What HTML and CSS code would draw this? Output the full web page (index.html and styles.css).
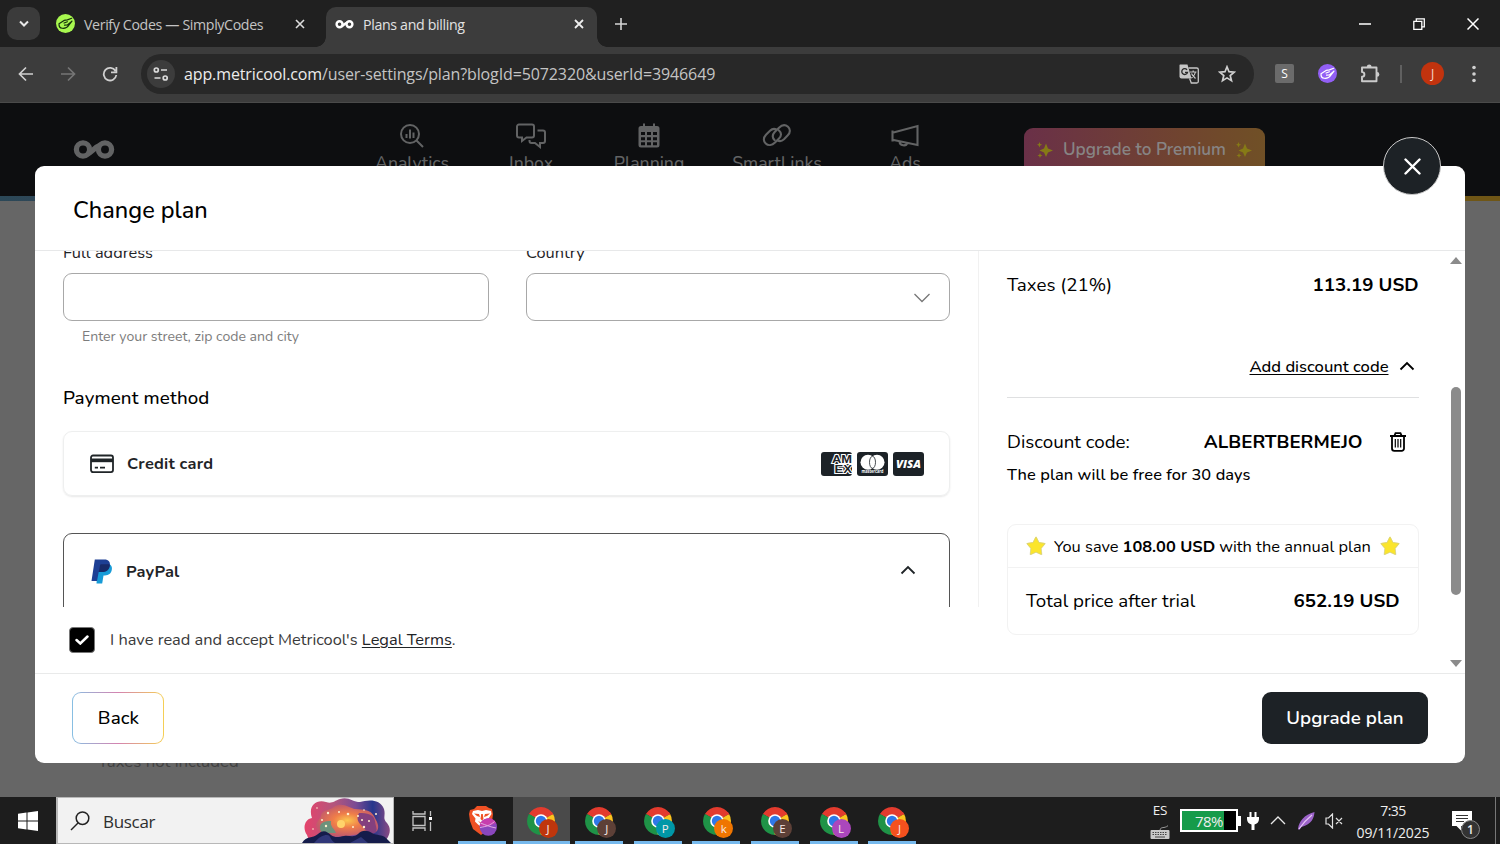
FILE: index.html
```html
<!DOCTYPE html>
<html lang="en">
<head>
<meta charset="utf-8">
<title>Plans and billing</title>
<link rel="stylesheet" href="styles.css">
</head>
<body>
<svg width="0" height="0" class="defs" aria-hidden="true">
  <symbol id="chrome" viewBox="0 0 28 28">
    <path d="M14 14 1.9 7A14 14 0 0 1 26.1 7z" fill="#e33b2e"/>
    <path d="M14 14 26.1 7A14 14 0 0 1 14 28z" fill="#fcc31e"/>
    <path d="M14 14 14 28A14 14 0 0 1 1.9 7z" fill="#1f9347"/>
    <path d="M1.9 7 8 17.5 14 14z" fill="#1f9347"/>
    <path d="M14 7.4H26.3L25 5H3z" fill="#e33b2e"/>
    <path d="M20 17.500 14 28l-1-3 3-8z" fill="#fcc31e"/>
    <circle cx="14" cy="14" r="6.800" fill="#fff"/><circle cx="14" cy="14" r="5.200" fill="#2f78e8"/>
  </symbol>
  <symbol id="hand" viewBox="0 0 20 20">
    <path d="M3.200 10.200 8.500 6.800l3.500-.6L16.500 4.500M3.200 10.200C3 13 4 14.800 6.500 15c3 .3 5.500-.8 7-3.200L16.800 7.500M8.500 9.500l3.500-1.300M9 11.800l3-.3 4.800-4" fill="none" stroke="currentColor" stroke-width="1.300" stroke-linecap="round" stroke-linejoin="round"/>
  </symbol>
  <symbol id="loops" viewBox="0 0 42 20">
    <g fill="none" stroke="currentColor" stroke-width="5.300"><circle cx="10" cy="9.500" r="6.600"/><circle cx="32" cy="9.500" r="6.600"/><path d="M14.500 14C19 12 22 7 27.500 5"/></g>
  </symbol>
  <symbol id="sparkles" viewBox="0 0 16 16">
    <path d="M9 1.500 11 6.500 16 8.500 11 10.500 9 15 7 10.500 2.500 8.500 7 6.500z M2.500 0 3.300 2 5.200 2.800 3.300 3.600 2.500 5.500 1.700 3.600 0 2.800 1.700 2z M3 11 3.700 12.800 5.500 13.500 3.700 14.200 3 16 2.300 14.200.5 13.500 2.300 12.800z" fill="#867a16"/>
  </symbol>
  <symbol id="star" viewBox="0 0 20 20">
    <path d="M10 1.500 12.600 6.900 18.500 7.800 14.500 12.200 15.200 18 10 15.600 4.800 18 5.500 12.200 1.500 7.800 7.400 6.900z" fill="#fbe52c" stroke="#fbe52c" stroke-width="1.600" stroke-linejoin="round"/>
    <path d="M10 .9 13 6.500 19.200 7.500 15.200 12.400 15.900 18.700 10 16.300 4.100 18.700 4.800 12.400.8 7.500 7 6.500z" fill="none" stroke="#c9c9a0" stroke-width=".6" stroke-linejoin="round"/>
  </symbol>
  <symbol id="up" viewBox="0 0 16 10"><path d="M1.500 8.500 8 2l6.500 6.500" fill="none" stroke="currentColor" stroke-width="1.800"/></symbol>
</svg>

<div class="screen">
  <div class="tabstrip">
    <div class="tab-search"><svg width="12" height="8" viewBox="0 0 12 8"><path d="M2 1.500 6 5.500 10 1.500" fill="none" stroke="#e8e8e8" stroke-width="2"/></svg></div>
    <div class="tab">
      <span class="fav"><svg width="19" height="19"><use href="#hand"/></svg></span>
      <span class="tab-title first">Verify Codes — SimplyCodes</span>
      <svg class="x" width="10" height="10" viewBox="0 0 10 10"><path d="M1 1l8 8M9 1 1 9" stroke="#ddd" stroke-width="1.600"/></svg>
    </div>
    <div class="tab active">
      <svg class="loop-fav" width="19" height="9"><use href="#loops"/></svg>
      <span class="tab-title second">Plans and billing</span>
      <svg class="x" width="10" height="10" viewBox="0 0 10 10"><path d="M1 1l8 8M9 1 1 9" stroke="#eee" stroke-width="1.800"/></svg>
    </div>
    <svg class="plus" width="12" height="12" viewBox="0 0 12 12"><path d="M6 0v12M0 6h12" stroke="#d5d5d5" stroke-width="1.600"/></svg>
    <div class="win">
      <svg width="12" height="12" viewBox="0 0 12 12"><path d="M0 6h12" stroke="#fff" stroke-width="1.500"/></svg>
      <svg width="12" height="12" viewBox="0 0 12 12"><path d="M.8 3.300h8v8h-8zM3.300 3.300V.8h8v8H8.800" fill="none" stroke="#fff" stroke-width="1.300"/></svg>
      <svg width="12" height="12" viewBox="0 0 12 12"><path d="M.5.5l11 11M11.500.5l-11 11" stroke="#fff" stroke-width="1.500"/></svg>
    </div>
  </div>

  <div class="toolbar">
    <svg class="nav-icon" width="16" height="16" viewBox="0 0 16 16"><path d="M15 8H2M8 1.500 1.500 8 8 14.500" fill="none" stroke="#d0d0d0" stroke-width="1.700"/></svg>
    <svg class="nav-icon" width="16" height="16" viewBox="0 0 16 16"><path d="M1 8h13M8 1.500 14.500 8 8 14.500" fill="none" stroke="#757575" stroke-width="1.700"/></svg>
    <svg class="nav-icon" width="16" height="16" viewBox="0 0 16 16"><path d="M13.500 5A6.300 6.300 0 1 0 14.300 9M14.400 1v5.300H9" fill="none" stroke="#d0d0d0" stroke-width="1.800"/></svg>
    <div class="omnibox">
      <span class="site"><svg width="16" height="14" viewBox="0 0 16 14"><g fill="none" stroke="#dadada" stroke-width="1.700"><circle cx="3.300" cy="3" r="2"/><path d="M8 3h6M1.500 11h6"/><circle cx="12.200" cy="11" r="2"/></g></svg></span>
      <span class="url"><b>app.metricool.com</b>/user-settings/plan?blogId=5072320&amp;userId=3946649</span>
      <svg width="20" height="20" viewBox="0 0 20 20"><path d="M1 .5h7.500l4 14H2.500A2 2 0 0 1 .5 12.500V1z" fill="#c6c6c6"/><path d="M9.500 4h8.300a1.500 1.500 0 0 1 1.500 1.500v12a1.500 1.500 0 0 1-1.500 1.500h-5.500l-1.700-4.500" fill="none" stroke="#c6c6c6" stroke-width="1.300"/><path d="M8 5.800a2.900 2.900 0 1 0 .5 2.500H6" fill="none" stroke="#282828" stroke-width="1.300"/><path d="M11 8h6.500M14.200 6.500V8M16.500 8c-.5 2.500-2 4.500-4 6M12.500 9.500c1 2 2.500 3.500 4 5" fill="none" stroke="#c6c6c6" stroke-width="1.200"/></svg>
      <svg class="bookmark" width="18" height="18" viewBox="0 0 18 18"><path d="M9 1.800 11 6.700 16.200 7.100 12.200 10.500 13.500 15.700 9 12.900 4.500 15.700 5.800 10.500 1.800 7.100 7 6.700z" fill="none" stroke="#d0d0d0" stroke-width="1.700"/></svg>
    </div>
    <div class="ext">
      <span class="ext-s">S</span>
      <span class="ext-hand"><svg width="19" height="19"><use href="#hand"/></svg></span>
      <svg class="puzzle" width="20" height="20" viewBox="0 0 20 20"><path d="M2 3.500h14.500v13.700H2v-4.500c3.200 0 3.200-4.600 0-4.600z" fill="none" stroke="#cbcbcb" stroke-width="1.900" stroke-linejoin="round"/><path d="M6.800 3a2.400 2.400 0 0 1 4.800 0zM17 8a2.400 2.400 0 0 1 0 4.800z" fill="#cbcbcb"/></svg>
      <i class="vsep"></i>
      <span class="avatar">J</span>
      <svg class="dots" width="4" height="18" viewBox="0 0 4 18"><g fill="#d0d0d0"><circle cx="2" cy="2.500" r="1.800"/><circle cx="2" cy="9" r="1.800"/><circle cx="2" cy="15.500" r="1.800"/></g></svg>
    </div>
  </div>

  <div class="page">
    <div class="site-header">
      <svg class="logo" width="42" height="20"><use href="#loops"/></svg>
      <div class="menu">
        <div class="menu-item"><svg width="26" height="26" viewBox="0 0 26 26"><g fill="none" stroke="#626364" stroke-width="2"><circle cx="11" cy="11" r="9"/><path d="M17.500 17.500l6.500 6.500M7.500 11v4M11 6.500v9M14.500 9.500v5.500"/></g></svg><span>Analytics</span></div>
        <div class="menu-item"><svg width="32" height="26" viewBox="0 0 32 26"><path d="M4 1.500h13a2 2 0 0 1 2 2v9a2 2 0 0 1-2 2h-5.500L7 18v-3.500H4a2 2 0 0 1-2-2v-9a2 2 0 0 1 2-2zM22.500 7.500H28a2 2 0 0 1 2 2V18a2 2 0 0 1-2 2h-3v4l-5-4h-3.500a2 2 0 0 1-2-2v-1" fill="none" stroke="#626364" stroke-width="2"/></svg><span>Inbox</span></div>
        <div class="menu-item"><svg width="22" height="26" viewBox="0 0 22 26"><path d="M3 3h16a2.500 2.500 0 0 1 2.500 2.500V22a2.500 2.500 0 0 1-2.500 2.500H3A2.500 2.500 0 0 1 .5 22V5.500A2.500 2.500 0 0 1 3 3zM5 .5h2V4H5zM15 .5h2V4h-2z" fill="#626364"/><path d="M3 9h4v3H3zM9 9h4v3H9zM15 9h4v3h-4zM3 14.200h4v3H3zM9 14.200h4v3H9zM15 14.200h4v3h-4zM3 19.300h4v2.900H3zM9 19.300h4v2.900H9zM15 19.300h4v2.900h-4z" fill="#0d0e10"/></svg><span>Planning</span></div>
        <div class="menu-item"><svg width="30" height="26" viewBox="0 0 30 26"><g fill="none" stroke="#626364" stroke-width="2.100" stroke-linecap="round"><path d="M12.500 17c-2.500-2.500-2-5.500.2-8L17 4.700c3-3 6.500-3.200 9-.9s2.500 5.700-.2 8.500l-3.800 4c-1.800 1.700-4.300 2.300-6.500 1.200M17 7.500c2.800 2.500 2.500 5.500 0 8l-4 4c-3 3-6.800 3.400-9.300 1s-2.500-5.800.3-8.700l4-4C9.800 6 12.500 5.500 14.500 6.500"/></g></svg><span>SmartLinks</span></div>
        <div class="menu-item"><svg width="28" height="26" viewBox="0 0 28 26"><path d="M1.500 7.500v11M1.500 9.800 26.500 3v19L1.500 16.800M8.500 18.500c0 4.500 7 5 7.500 1.500" fill="none" stroke="#626364" stroke-width="2.100"/></svg><span>Ads</span></div>
      </div>
      <div class="premium"><svg width="16" height="16"><use href="#sparkles"/></svg><span>Upgrade to Premium</span><svg width="16" height="16"><use href="#sparkles"/></svg></div>
    </div>
    <div class="rainbow"></div>
    <div class="backdrop"><span>Taxes not included</span></div>

    <div class="modal">
      <div class="modal-head">Change plan</div>
      <div class="modal-body">
        <div class="left">
          <div class="form">
            <div class="fields">
              <div class="field"><label>Full address</label><div class="input"></div><small>Enter your street, zip code and city</small></div>
              <div class="field"><label>Country</label><div class="input select"><svg width="16" height="10" viewBox="0 0 16 10"><path d="M.5 1 8 8.500 15.500 1" fill="none" stroke="#777" stroke-width="1.300"/></svg></div></div>
            </div>
            <div class="pay-title">Payment method</div>
            <div class="pay-card">
              <svg width="24" height="20" viewBox="0 0 24 20"><rect x="1" y="1.500" width="22" height="16.600" rx="2" fill="none" stroke="#1f2427" stroke-width="1.800"/><path d="M1 4.500h22v3.700H1z" fill="#1f2427"/><path d="M4.800 13.700H8M10 13.700h5" stroke="#1f2427" stroke-width="1.700"/></svg>
              <span class="credit">Credit card</span>
              <div class="brands">
                <svg width="31" height="24" viewBox="0 0 31 24"><rect width="31" height="24" rx="3" fill="#1c2227"/><text x="11" y="11.300" class="amex" textLength="20" lengthAdjust="spacingAndGlyphs">AM</text><text x="13.500" y="20.600" class="amex" textLength="17.500" lengthAdjust="spacingAndGlyphs">EX</text></svg>
                <svg width="31" height="24" viewBox="0 0 31 24"><rect width="31" height="24" rx="3" fill="#1c2227"/><circle cx="11" cy="10.300" r="7.500" fill="#fff"/><circle cx="20" cy="10.300" r="7.500" fill="#fff"/><ellipse cx="15.500" cy="10.300" rx="3" ry="6" fill="#fff" stroke="#1c2227" stroke-width=".8"/><text x="4.500" y="21.300" class="mc" textLength="22" lengthAdjust="spacingAndGlyphs">mastercard</text></svg>
                <svg width="31" height="24" viewBox="0 0 31 24"><rect width="31" height="24" rx="3" fill="#1c2227"/><text x="3" y="16" class="visa" textLength="25" lengthAdjust="spacingAndGlyphs">VISA</text></svg>
              </div>
            </div>
            <div class="pay-card paypal">
              <svg width="22" height="25" viewBox="0 0 22 25"><path d="M7 5h11c3 1.500 3.500 4 2.500 7-1.200 3.500-4 4.500-8 4.500l-1.300 8H5.500z" fill="#179bd7"/><path d="M3.800.5h9.700c4 0 6 2.300 5.300 6.200-.7 4.200-3.500 6.300-8 6.300H7.700L6 22H.5z" fill="#1d3f94"/><path d="M7.800 13 9 6.500c.1-.8.600-1.200 1.400-1.200h6.500c.8 0 1.400.1 1.900.4-.2 5-3.200 7.300-8 7.300z" fill="#172a68"/></svg>
              <span class="pp">PayPal</span>
              <svg class="chev" width="16" height="10"><use href="#up"/></svg>
            </div>
          </div>
          <div class="terms">
            <span class="check"><svg width="14" height="10" viewBox="0 0 14 10"><path d="M1.500 5 5.300 8.500 12.500 1.500" fill="none" stroke="#fff" stroke-width="2.500" stroke-linecap="round"/></svg></span>
            <span>I have read and accept Metricool's&nbsp;</span><a>Legal Terms</a><span>.</span>
          </div>
        </div>
        <div class="right">
          <div class="row taxes"><span>Taxes (21%)</span><b>113.19 USD</b></div>
          <div class="add"><a>Add discount code</a><svg width="16" height="10"><use href="#up"/></svg></div>
          <div class="row code"><span>Discount code:</span><b>ALBERTBERMEJO</b><svg width="18" height="20" viewBox="0 0 18 20"><path d="M1 4h16M5.500 3.500 6.500 1.200h5l1 2.300M3 4v12.500a2.300 2.300 0 0 0 2.300 2.300h7.400a2.300 2.300 0 0 0 2.300-2.300V4" fill="none" stroke="#000" stroke-width="1.800"/><path d="M6.300 7v8.500M9 7v8.500M11.700 7v8.500" stroke="#000" stroke-width="1.200"/></svg></div>
          <div class="free">The plan will be free for 30 days</div>
          <div class="total-box">
            <div class="save"><svg width="20" height="20"><use href="#star"/></svg><span class="s1">You save</span><b>108.00 USD</b><span>with the annual plan</span><svg width="20" height="20"><use href="#star"/></svg></div>
            <div class="row total"><span>Total price after trial</span><b>652.19 USD</b></div>
          </div>
        </div>
        <div class="scrollbar"><i class="arrow-up"></i><i class="thumb"></i><i class="arrow-down"></i></div>
      </div>
      <div class="modal-foot"><div class="back">Back</div><div class="upgrade">Upgrade plan</div></div>
      <div class="close"><svg width="17" height="17" viewBox="0 0 17 17"><path d="M1.500 1.500l14 14M15.500 1.500l-14 14" stroke="#fff" stroke-width="2.400" stroke-linecap="round"/></svg></div>
    </div>
  </div>

  <div class="taskbar">
    <div class="start"><svg width="20" height="20" viewBox="0 0 20 20"><path d="M0 2.800 8.500 1.600V9.500H0zM9.500 1.500 20 0v9.500H9.500zM0 10.500h8.500v7.900L0 17.200zM9.500 10.500H20V20L9.500 18.500z" fill="#fff"/></svg></div>
    <div class="search">
      <svg width="20" height="20" viewBox="0 0 20 20"><g fill="none" stroke="#222" stroke-width="1.500"><circle cx="12.500" cy="7.200" r="6.300"/><path d="M8 12 1 19"/></g></svg>
      <span>Buscar</span>
      <svg class="art" width="90" height="45" viewBox="0 0 90 45">
        <defs><linearGradient id="sky"><stop offset="0" stop-color="#e5436b"/><stop offset=".35" stop-color="#b3567d"/><stop offset=".6" stop-color="#7b4b94"/><stop offset=".8" stop-color="#26368c"/><stop offset="1" stop-color="#8a4a83"/></linearGradient><radialGradient id="glow"><stop offset="0" stop-color="#fbc74f"/><stop offset=".45" stop-color="#ef7d49"/><stop offset="1" stop-color="#c25a6b"/></radialGradient></defs>
        <path d="M5 37C0 30 3 21 10 20 6 9 13 1 24 4c6 2 8-1 14-3 8-3 13 3 20 3 7-2 20-4 24 7 2 7-2 9 3 14 5 6 2 12 1 14l-4 6H8z" fill="url(#sky)"/>
        <path d="M15 30c-3-6 4-8 4-13 2-6 9-4 14-9 8-4 15 2 20 3 8 1 15 0 19 7 3 6 6 10 3 15-6 6-16 2-24 4s-32 3-36-7z" fill="url(#glow)"/>
        <path d="M18 31c-1-7 5-8 11-8-1 6 3 7 5 12H20z" fill="#6c927c"/><path d="M57 15c8 0 15 1 16 8s3 9 0 12c-7 2-9-3-13-7s-6-7-3-13z" fill="#84407e"/>
        <path d="M0 45C5 37 10 41 16 36s9-2 13 1 8 2 13 1 10 2 14-2 9-4 14-1 10 1 14 5l5 5z" fill="#151c4b"/><path d="M12 45c5-6 9-8 13-8s3 5 8 8zM48 45l11-6 7 6z" fill="#303779"/>
        <g fill="#fff1cf"><circle cx="39" cy="26" r="4" fill="#ffd36a"/><circle cx="26" cy="15" r="1.200"/><circle cx="37" cy="14" r="1"/><circle cx="46" cy="16" r="1.300"/><circle cx="56" cy="18" r="1"/><circle cx="60" cy="22" r="1"/><circle cx="67" cy="23" r="1"/><circle cx="24" cy="28" r="1.200"/><circle cx="51" cy="29" r="1"/><circle cx="62" cy="29" r="1.200"/><circle cx="20" cy="22" r="1"/><circle cx="15" cy="10" r=".8"/><circle cx="74" cy="16" r="1"/><circle cx="62" cy="12" r=".8"/><circle cx="11" cy="31" r=".8"/></g>
      </svg>
    </div>
    <div class="taskview"><svg width="21" height="20" viewBox="0 0 21 20"><g fill="none" stroke="#c4c4c4" stroke-width="1.300"><path d="M1 0v3h12V0M1 20v-3h12v3M1 5.500h12v9H1zM18.500 0v5M18.500 11v9"/><path d="M17 7.500h3" stroke="#fff" stroke-width="3"/></g></svg></div>
    <div class="apps">
      <div class="app brave"><svg width="28" height="30" viewBox="0 0 28 30"><path d="M8 0h9l3 2 3 1 1 5-1 8-3 7-8 6-8-6-3-8-1-7 1-4 4-1z" fill="#ef5124"/><path d="M4 5l5-1 4 1 4-1 5 1 .5 3-3 4.500.5 3-3 3-4 3-4-3-3-3 .5-3L3 8z" fill="#fff"/><path d="M5 7.500l5 .500 1 3-3-1zM21 7.500 16 8l-1 3 3-1zM12.200 8h1.600l.7 5-1.500 1.500L11.500 13zM9 15l4 2 4-2-4 4z" fill="#ef5124"/><circle cx="19.300" cy="21" r="8.700" fill="#8a47bd"/><path d="M10.700 20A8.700 8.700 0 0 1 27 17l-10 4z" fill="#c73eae"/><path d="M11.500 17c5 2 10 4 15.500 5M11 21.500c6-1 10-2 14.500-6" stroke="#e3a8e4" fill="none"/></svg></div>
      <div class="app current"><svg width="28" height="28"><use href="#chrome"/></svg><span class="badge red">J</span></div>
      <div class="app"><svg width="28" height="28"><use href="#chrome"/></svg><span class="badge brown">J</span></div>
      <div class="app"><svg width="28" height="28"><use href="#chrome"/></svg><span class="badge teal">P</span></div>
      <div class="app"><svg width="28" height="28"><use href="#chrome"/></svg><span class="badge amber">k</span></div>
      <div class="app"><svg width="28" height="28"><use href="#chrome"/></svg><span class="badge brown">E</span></div>
      <div class="app"><svg width="28" height="28"><use href="#chrome"/></svg><span class="badge purple">L</span></div>
      <div class="app"><svg width="28" height="28"><use href="#chrome"/></svg><span class="badge orange">J</span></div>
    </div>
    <div class="tray">
      <div class="lang"><span>ES</span><svg width="20" height="15" viewBox="0 0 20 15"><path d="M10 5C11 1 14 4 18 .7" fill="none" stroke="#999"/><rect x=".5" y="5" width="19" height="9" rx="1" fill="#c9c9c9"/><path d="M2.500 7.500h15M2.500 9.500h15" stroke="#444" stroke-dasharray="1.500 1"/><path d="M5 12h10" stroke="#444"/></svg></div>
      <div class="battery"><i></i><span>78%</span></div>
      <svg class="plug" width="12" height="18" viewBox="0 0 12 18"><path d="M2.500 0h2v5h3V0h2v5H12v2c0 3-2 5-4.500 5.500V18h-3v-5.500C2 12 0 10 0 7V5h2.500z" fill="#fff"/></svg>
      <svg class="tray-up" width="16" height="9" viewBox="0 0 16 9"><path d="M1 8l7-7 7 7" fill="none" stroke="#e8e8e8" stroke-width="1.300"/></svg>
      <svg class="feather" width="17" height="18" viewBox="0 0 17 18"><path d="M16.500 0C16 6 14 12 3.500 15L1 18 0 17C1 9 6 3 16.500 0z" fill="#9c63c9"/><path d="M1 17C5 11 9 7 14 3" stroke="#e5c6f5" fill="none" stroke-width="1.200"/></svg>
      <svg class="mute" width="18" height="16" viewBox="0 0 18 16"><path d="M1 5h2.500L7.500 1v14l-4-4H1zM11 5l6 6M17 5l-6 6" fill="none" stroke="#e2e2e2" stroke-width="1.200"/></svg>
      <div class="clock"><span class="time">7:35</span><span>09/11/2025</span></div>
      <div class="note"><svg width="20" height="20" viewBox="0 0 20 20"><path d="M0 0h20v15H9v4.500L4.500 15H0z" fill="#fff"/><path d="M4 4.500h12M4 7.500h12M4 10.500h8" stroke="#333" stroke-width="1.200"/></svg><span>1</span></div>
      <i class="peek"></i>
    </div>
  </div>
</div>
</body>
</html>
```
FILE: styles.css
```css
* { box-sizing: border-box; }
body { margin: 0; font-family: "Nunito", "Open Sans", "Noto Sans", sans-serif; color: #000; overflow: hidden; }
svg { flex: none; display: block; }
.defs { position: absolute; }
b { font-weight: 700; }
span, a, b, label { white-space: nowrap; }
.screen { width: 1500px; height: 844px; display: flex; flex-direction: column; background: #666; }
.tabstrip, .toolbar, .taskbar { font-family: "Open Sans", "Noto Sans", sans-serif; }

/* Browser tabs */
.tabstrip { height: 47px; flex: none; background: #202020; display: flex; align-items: center; padding-left: 7px; color: #c4c4c4; font-size: 14.2px; }
.tab-search { width: 33px; height: 33px; border-radius: 10px; background: #3b3b3b; display: flex; align-items: center; justify-content: center; }
.tab { display: flex; align-items: center; height: 40px; }
.tab:not(.active) { width: 286px; padding: 0 21px 0 16px; }
.fav, .ext-hand { width: 19px; height: 19px; border-radius: 50%; background: #a8f84f; color: #17300c; }
.fav { margin-right: 9px; }
.tab-title { flex: 1; line-height: 20px; padding-top: 2px; }
.first { letter-spacing: -.36px; }
.second { letter-spacing: -.34px; color: #e2e2e2; }
.tab.active { width: 271px; background: #3c3c3c; border-radius: 10px 10px 0 0; align-self: flex-end; padding: 0 13px 6px 9px; position: relative; }
.tab.active::before, .tab.active::after { content: ""; position: absolute; bottom: 0; width: 10px; height: 10px; }
.tab.active::before { left: -10px; background: radial-gradient(circle at 0 0, #202020 9.5px, #3c3c3c 10px); }
.tab.active::after { right: -10px; background: radial-gradient(circle at 100% 0, #202020 9.5px, #3c3c3c 10px); }
.loop-fav { color: #fff; margin-right: 9px; }
.plus { margin-left: 18px; }
.win { margin-left: auto; display: flex; gap: 42px; padding-right: 21px; }

/* Address row */
.toolbar { height: 56px; flex: none; background: #3c3c3c; border-bottom: 1px solid #4a4a4a; display: flex; align-items: center; padding: 0 24px 2px 18px; }
.nav-icon { margin-right: 26px; }
.omnibox { width: 1113px; height: 40px; border-radius: 20px; background: #282828; display: flex; align-items: center; padding: 0 18px 0 6px; margin-left: -3px; }
.site { width: 28px; height: 28px; border-radius: 50%; background: #3c3c3c; display: flex; align-items: center; justify-content: center; margin-right: 9px; }
.url { flex: 1; font-size: 16px; letter-spacing: -.12px; color: #c4c4c4; }
.url b { font-weight: 400; color: #ececec; }
.bookmark { margin-left: 19px; }
.ext { flex: 1; display: flex; align-items: center; padding-left: 21px; }
.ext-s { width: 19px; height: 19px; border-radius: 2px; background: #6b6b6b; color: #fff; font-size: 12px; line-height: 19px; text-align: center; }
.ext-hand { background: #925ff5; color: #fff; margin-left: 24px; }
.puzzle { margin-left: 23px; }
.vsep { width: 2px; height: 18px; background: #606060; margin-left: 20px; }
.avatar { width: 23px; height: 23px; border-radius: 50%; background: #c2330e; color: #f4d8cf; font-size: 12px; line-height: 23px; text-align: center; margin-left: 19px; }
.dots { margin-left: auto; }

/* Page behind the dialog */
.page { position: relative; height: 694px; flex: none; display: flex; flex-direction: column; }
.site-header { height: 93px; flex: none; overflow: hidden; background: #0d0e10; display: flex; padding-left: 73px; }
.logo { color: #626364; margin-top: 37px; }
.menu { display: flex; margin-left: 232px; color: #626364; font-size: 17.58px; font-weight: 500; }
.menu-item { width: 128px; display: flex; flex-direction: column; align-items: center; padding-top: 20px; line-height: 22px; }
.menu-item span { margin-top: 3px; }
.menu-item:nth-child(1) { width: 130px; margin-right: -5px; }
.menu-item:nth-child(2), .menu-item:nth-child(3) { width: 118px; }
.menu-item:nth-child(4) { width: 138px; margin-right: -5px; }
.premium { width: 241px; height: 60px; margin: 25px 0 0 55px; border-radius: 9px; background: linear-gradient(90deg, #6a3048, #70442f 65%, #705026); display: flex; gap: 10px; padding: 14px 13px 0; color: #878484; font-size: 17.2px; font-weight: 600; line-height: 16px; }
.rainbow { height: 5px; flex: none; background: linear-gradient(90deg, #2b4858, #6d3149 50%, #6f5616 96%); }
.backdrop { flex: 1; background: #666; display: flex; align-items: flex-end; padding: 0 0 24px 98px; color: #414141; font-size: 16.8px; line-height: 22px; }

/* Dialog */
.modal { position: absolute; left: 35px; top: 63px; width: 1430px; height: 597px; background: #fff; border-radius: 9px; display: flex; flex-direction: column; }
.modal-head { height: 85px; border-bottom: 1px solid #e7e8e9; padding: 0 38px; font-size: 23.5px; font-weight: 500; line-height: 88px; }
.modal-body { height: 422px; display: flex; }
.modal-foot { height: 90px; border-top: 1px solid #e9eaea; display: flex; justify-content: space-between; align-items: flex-start; padding: 18px 37px; font-size: 18.75px; }
.left { width: 944px; }
.form { height: 356px; overflow: hidden; padding: 0 28px; border-right: 1px solid #f1f1f1; }
.fields { display: grid; grid-template-columns: 425.500px 424px; gap: 37.500px; height: 125px; }
.field { display: flex; flex-direction: column; }
.field label { font-size: 16.4px; line-height: 20px; margin-top: -8px; color: #1f2427; }
.input { height: 48px; border: 1px solid #a8a8a8; border-radius: 9px; margin-top: 10px; }
.select { display: flex; align-items: center; justify-content: flex-end; padding: 2px 19px 0 0; }
.field small { font-size: 14.1px; line-height: 20px; color: #7c7c7c; padding: 6px 0 0 19px; }
.pay-title { font-size: 18.75px; font-weight: 500; line-height: 28px; letter-spacing: .12px; margin-top: 8px; }
.pay-card { height: 65px; margin-top: 19px; border: 1px solid #eeefef; border-radius: 9px; box-shadow: 0 1px 2px #00000018; display: flex; align-items: center; padding: 0 25px 0 26px; color: #1f2427; font-size: 16.4px; font-weight: 700; }
.credit { margin-left: 13px; letter-spacing: .22px; }
.brands { margin-left: auto; display: flex; gap: 5px; }
.amex { font: 700 10px "Liberation Sans", sans-serif; fill: #1c2227; stroke: #fff; stroke-width: 1.8px; paint-order: stroke; }
.mc { font: 700 4.500px "Open Sans", sans-serif; fill: #fff; }
.visa { font: italic 800 11px "Open Sans", sans-serif; fill: #fff; }
.paypal { height: 90px; margin-top: 37px; border-color: #555; padding: 0 33px 14px 27px; box-shadow: none; border-radius: 9px 9px 0 0; }
.pp { margin-left: 13px; letter-spacing: .2px; }
.chev { margin-left: auto; margin-bottom: 2px; }
.terms { height: 66px; display: flex; align-items: center; padding: 0 0 1px 34px; font-size: 16.4px; color: #3a3a3a; }
.check { width: 26px; height: 26px; border-radius: 4px; background: #000; border: 1px solid #777; display: flex; align-items: center; justify-content: center; margin-right: 15px; }
.terms a { text-decoration: underline; text-underline-offset: 2px; color: #1f2427; }
.right { width: 439.500px; padding: 0 0 0 28px; font-size: 18.75px; }
.row { display: flex; justify-content: space-between; align-items: center; height: 30px; }
.taxes { margin-top: 19px; }
.add { height: 50px; margin-top: 48px; border-bottom: 1px solid #dfe0e1; display: flex; justify-content: flex-end; gap: 10px; padding: 9px 4px 0 0; font-size: 16.6px; font-weight: 500; line-height: 20px; }
.add a { text-decoration: underline; text-underline-offset: 2px; }
.add svg { margin-top: 4px; }
.code { margin-top: 29px; padding-right: 12px; }
.code span { margin-right: auto; }
.code b { margin-right: 26px; }
.free { font-size: 16.4px; font-weight: 500; line-height: 24px; margin-top: 6px; letter-spacing: .08px; }
.total-box { height: 111px; margin-top: 37px; border: 1px solid #f2f2f2; border-radius: 9px; }
.save { height: 43px; border-bottom: 1px solid #f2f2f2; display: flex; align-items: center; padding: 0 18px; font-size: 16.4px; }
.save svg:last-child { margin-left: auto; }
.s1 { margin: 0 4px 0 8px; }
.save b { margin-right: 4px; }
.total { padding: 0 18px; height: 66px; }
.scrollbar { width: 46.500px; display: flex; flex-direction: column; align-items: center; padding: 6px 0 6px 28.500px; }
.arrow-up { border: 6px solid transparent; border-top: 0; border-bottom: 7px solid #8b8b8b; }
.arrow-down { border: 6px solid transparent; border-bottom: 0; border-top: 7px solid #8b8b8b; margin-top: auto; }
.thumb { width: 10px; height: 208px; border-radius: 5px; background: #8b8b8b; margin-top: 123px; }
.back { width: 92px; height: 52px; border: 1px solid transparent; border-radius: 9px; background: linear-gradient(#fff, #fff) padding-box, linear-gradient(90deg, #87bfe3, #d483b0 50%, #f5cf55) border-box; text-align: center; line-height: 50px; font-weight: 500; letter-spacing: .1px; padding-left: 1px; }
.upgrade { width: 166px; height: 52px; border-radius: 9px; background: #1d2226; color: #fff; text-align: center; line-height: 52px; font-weight: 600; letter-spacing: .05px; }
.close { position: absolute; left: 1348px; top: -29px; width: 58px; height: 58px; border-radius: 50%; background: #1d2226; border: 1px solid #c9c9c9; display: flex; align-items: center; justify-content: center; }

/* Windows taskbar */
.taskbar { height: 47px; flex: none; background: #1d1d1d; display: flex; color: #eee; position: relative; z-index: 1; }
.start { width: 56px; display: flex; align-items: center; justify-content: center; }
.search { width: 338px; background: #f2f2f2; border: 1px solid #b8b8b8; border-left-width: 2px; display: flex; align-items: center; padding-left: 12px; color: #2e2e2e; font-size: 17px; }
.search span { letter-spacing: -.31px; margin-left: 13px; padding-top: 2px; }
.art { margin-left: auto; margin-right: 1px; }
.taskview { width: 60px; display: flex; align-items: center; justify-content: center; padding-right: 4px; }
.apps { display: flex; }
.app { width: 58.6px; position: relative; display: flex; align-items: center; justify-content: center; padding: 1px 2px 0 0; }
.app::after { content: ""; position: absolute; left: 4px; bottom: 0; width: 48px; height: 3px; background: #76b9ed; }
.brave { padding-right: 0; }
.current { background: linear-gradient(90deg, #4a4a4a 57px, transparent 0); }
.current::after { left: 0; width: 57px; }
.badge { position: absolute; left: 26px; top: 21.500px; width: 19px; height: 19px; border-radius: 50%; color: #f6e9e6; font-size: 11.500px; font-weight: 500; line-height: 19px; text-align: center; }
.red { background: #bf360c; } .brown { background: #5d4037; } .teal { background: #0097a7; } .amber { background: #ef7500; } .purple { background: #ab47bc; } .orange { background: #f4511e; }
.tray { margin-left: auto; display: flex; align-items: center; }
.lang { width: 20px; display: flex; flex-direction: column; align-items: center; font-size: 13.500px; line-height: 16px; gap: 7px; letter-spacing: -.1px; }
.battery { width: 58px; height: 23px; border: 2px solid #fff; margin-left: 10px; background: linear-gradient(90deg, #169b4a 42px, #000 0); position: relative; text-align: center; font-size: 15px; line-height: 20px; letter-spacing: -.6px; }
.battery i { position: absolute; right: -5px; top: 5px; width: 3px; height: 10px; background: #fff; }
.plug { margin-left: 9px; }
.tray-up { margin-left: 11px; }
.feather { margin-left: 12px; }
.mute { margin-left: 10px; }
.clock { display: flex; flex-direction: column; align-items: center; width: 74px; margin-left: 13px; font-size: 14px; line-height: 22px; padding-top: 2px; letter-spacing: -.15px; }
.time { letter-spacing: -.5px; }
.note { margin-left: 22px; position: relative; }
.note span { position: absolute; left: 9px; top: 9px; width: 19px; height: 19px; border-radius: 50%; background: #333; border: 1px solid #888; font-size: 12px; font-weight: 600; line-height: 17px; text-align: center; }
.peek { width: 1px; height: 47px; background: #777; margin: 0 4px 0 23px; }
```
